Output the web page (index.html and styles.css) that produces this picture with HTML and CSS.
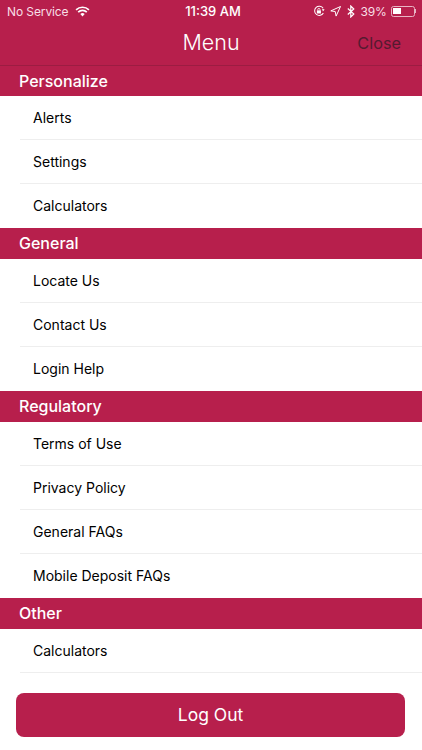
FILE: index.html
```html
<!DOCTYPE html>
<html lang="en">
<head>
    <meta charset="UTF-8">
    <meta name="viewport" content="width=device-width, initial-scale=1.0">
    <title>Menu</title>
    <link rel="stylesheet" href="styles.css">
</head>
<body>
    <div class="status-bar">
        <div class="status-left">
            <span>No Service</span>
            <svg class="wifi" width="15" height="11" viewBox="0 0 16 12">
                <path d="M8 11.5 5.6 8.8a3.5 3.5 0 0 1 4.8 0z" fill="#fff"/>
                <path d="M1 4.2a10 10 0 0 1 14 0M3.3 6.6a6.8 6.8 0 0 1 9.4 0" fill="none" stroke="#fff" stroke-width="1.8"/>
            </svg>
        </div>
        <div class="status-time">11:39 AM</div>
        <div class="status-right">
            <svg width="12" height="12" viewBox="0 0 13 13">
                <path d="M11.2 8.6A5 5 0 1 1 11 3.6" fill="none" stroke="#fff" stroke-width="1.1"/>
                <path d="M9.6 4.4h2.9L11.4 7z" fill="#fff" transform="rotate(20 11 5)"/>
                <rect x="4.2" y="5.8" width="4.4" height="3.4" fill="#fff"/>
                <path d="M5.2 5.8V4.9a1.2 1.2 0 0 1 2.4 0v.9" fill="none" stroke="#fff" stroke-width="0.9"/>
            </svg>
            <svg width="11" height="11" viewBox="0 0 11 11">
                <path d="M10.5.5 .8 4.9l4.4.6.9 4.6z" fill="none" stroke="#fff" stroke-width="1"/>
            </svg>
            <svg width="8" height="13" viewBox="0 0 8 13">
                <path d="M.8 3.5 6.8 9 3.8 12V1l3 3-6 5.5" fill="none" stroke="#fff" stroke-width="1.2"/>
            </svg>
            <span class="battery-text">39%</span>
            <div class="battery"><div class="battery-fill"></div></div>
            <div class="battery-tip"></div>
        </div>
    </div>

    <div class="nav-bar">
        <h1>Menu</h1>
        <span class="close-link">Close</span>
    </div>

    <div class="menu">
        <h2 class="section-title">Personalize</h2>
        <ul class="section-list">
            <li>Alerts</li>
            <li>Settings</li>
            <li>Calculators</li>
        </ul>
        <h2 class="section-title">General</h2>
        <ul class="section-list">
            <li>Locate Us</li>
            <li>Contact Us</li>
            <li>Login Help</li>
        </ul>
        <h2 class="section-title">Regulatory</h2>
        <ul class="section-list">
            <li>Terms of Use</li>
            <li>Privacy Policy</li>
            <li>General FAQs</li>
            <li>Mobile Deposit FAQs</li>
        </ul>
        <h2 class="section-title">Other</h2>
        <ul class="section-list">
            <li class="with-line">Calculators</li>
        </ul>
    </div>

    <div class="logout-wrap">
        <button class="logout-btn">Log Out</button>
    </div>
</body>
</html>
```

FILE: styles.css
```css
* {
    box-sizing: border-box;
}
html, body {
    height: 100%;
}
body {
    margin: 0;
    font-family: Inter, 'Liberation Sans', sans-serif;
    background-color: #fff;
    color: #000;
    overflow: hidden;
}
.status-bar {
    display: grid;
    grid-template-columns: 1fr auto 1fr;
    align-items: center;
    height: 22px;
    padding: 0 6px 0 7px;
    background-color: #b71f4c;
    color: #fff;
    font-size: 12px;
}
.status-left {
    display: flex;
    align-items: center;
    gap: 6px;
    color: #f8dfe6;
    letter-spacing: -0.1px;
}
.status-time {
    margin-left: 3px;
    font-weight: 500;
    font-size: 13px;
}
.status-right {
    display: flex;
    align-items: center;
    justify-content: flex-end;
    gap: 5.5px;
}
.battery-text {
    color: #f8dfe6;
    letter-spacing: -0.2px;
}
.battery {
    width: 24px;
    height: 11px;
    margin-left: -1.5px;
    padding: 1.5px;
    border: 1px solid #e8b4c4;
    border-radius: 2.5px;
}
.battery-fill {
    width: 8px;
    height: 100%;
    background-color: #fff;
}
.battery-tip {
    width: 1.5px;
    height: 4px;
    margin-left: -5.5px;
    background-color: #e8b4c4;
}
.nav-bar {
    position: relative;
    height: 43.5px;
    background-color: #b71f4c;
    border-bottom: 1px solid #9c1c42;
    text-align: center;
}
.nav-bar h1 {
    margin: 0;
    font-size: 21.5px;
    font-weight: 300;
    line-height: 41px;
    color: #fff;
}
.close-link {
    position: absolute;
    top: 10px;
    right: 21px;
    font-size: 16.3px;
    font-weight: 400;
    line-height: 22px;
    color: #551a30;
}
.section-title {
    margin: 0;
    height: 30.6px;
    padding-left: 19px;
    background-color: #b71f4c;
    color: #fff;
    font-size: 16px;
    font-weight: 500;
    line-height: 30px;
}
.section-list {
    margin: 0;
    padding: 0 0 0 20px;
    list-style: none;
}
.section-list li {
    height: 44.1px;
    padding-left: 13px;
    font-size: 14px;
    line-height: 44px;
    border-bottom: 1px solid #eeeeee;
}
.section-list li:last-child {
    border-bottom: none;
}
.section-list li.with-line {
    border-bottom: 1px solid #eeeeee;
}
.logout-wrap {
    padding: 20px 17px 0 16px;
}
.logout-btn {
    display: block;
    width: 100%;
    height: 44px;
    border: none;
    border-radius: 8px;
    background-color: #b71f4c;
    color: #fff;
    font-family: inherit;
    font-size: 17.5px;
    font-weight: 400;
}
```
